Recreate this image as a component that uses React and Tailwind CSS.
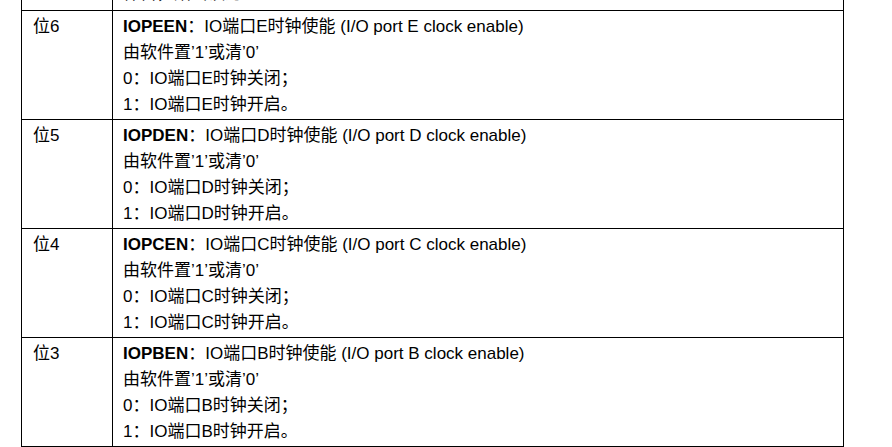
export default function App() {
  const rows = [
    { bit: '6', name: 'IOPEEN', port: 'E' },
    { bit: '5', name: 'IOPDEN', port: 'D' },
    { bit: '4', name: 'IOPCEN', port: 'C' },
    { bit: '3', name: 'IOPBEN', port: 'B' },
  ];

  return (
    <div
      className="h-[447px] w-[892px] overflow-hidden bg-white text-black text-[17px] leading-[26px]"
      style={{ fontFamily: '"Liberation Sans", Arial, "Noto Sans CJK SC", sans-serif' }}
    >
      <div className="ml-[21px] mt-[-98px] w-[823px] border-l border-r border-black">
        {/* partial row cut off at the top */}
        <div className="flex h-[109px] border-b border-black">
          <div className="w-[91px] shrink-0 border-r border-black pl-[11px] pt-[3px]">位31:7</div>
          <div className="flex flex-col justify-end pl-[10px] pb-[3px]">
            <p>保留，始终读为0。</p>
          </div>
        </div>

        {rows.map((row) => (
          <div key={row.bit} className="flex h-[109px] border-b border-black">
            <div className="w-[91px] shrink-0 border-r border-black pl-[11px] pt-[3px]">位{row.bit}</div>
            <div className="pl-[10px] pt-[3px]">
              <p>
                <span className="font-bold">{row.name}</span>：IO端口{row.port}时钟使能 (I/O port {row.port} clock enable)
              </p>
              <p>由软件置’1’或清’0’</p>
              <p>0：IO端口{row.port}时钟关闭；</p>
              <p>1：IO端口{row.port}时钟开启。</p>
            </div>
          </div>
        ))}
        <div className="flex h-[40px]">
          <div className="w-[91px] shrink-0 border-r border-black"></div>
        </div>
      </div>
    </div>
  );
}
